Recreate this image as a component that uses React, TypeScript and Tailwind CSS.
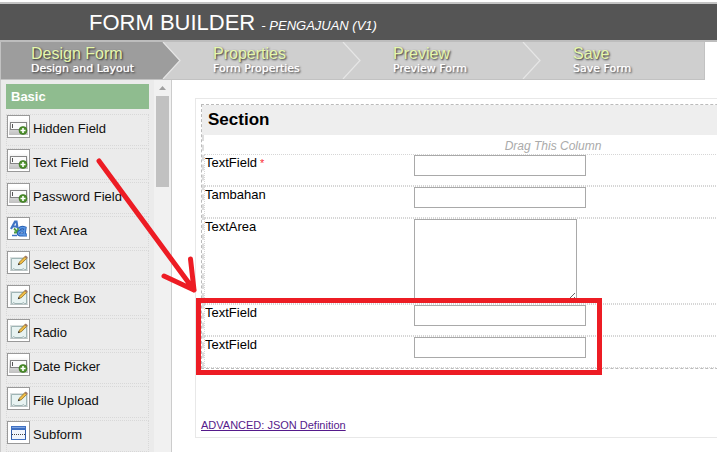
import type { ReactNode } from "react";

type IconKind = "field" | "area" | "edit" | "subform";

const steps = [
  { title: "Design Form", note: "Design and Layout", active: true },
  { title: "Properties", note: "Form Properties", active: false },
  { title: "Preview", note: "Preview Form", active: false },
  { title: "Save", note: "Save Form", active: false },
];

const palette: { label: string; icon: IconKind }[] = [
  { label: "Hidden Field", icon: "field" },
  { label: "Text Field", icon: "field" },
  { label: "Password Field", icon: "field" },
  { label: "Text Area", icon: "area" },
  { label: "Select Box", icon: "edit" },
  { label: "Check Box", icon: "edit" },
  { label: "Radio", icon: "edit" },
  { label: "Date Picker", icon: "field" },
  { label: "File Upload", icon: "edit" },
  { label: "Subform", icon: "subform" },
];

function FieldIcon() {
  return (
    <svg width="21" height="21" viewBox="0 0 21 21" aria-hidden="true">
      <defs>
        <linearGradient id="fieldBg" x1="0" y1="0" x2="0" y2="1">
          <stop offset="0" stopColor="#ffffff" />
          <stop offset="1" stopColor="#c0c0c0" />
        </linearGradient>
      </defs>
      <rect x="1" y="3" width="19" height="16" fill="url(#fieldBg)" />
      <rect x="2.500" y="6.500" width="16" height="7" fill="#fbfbfb" stroke="#858585" />
      <path d="M4.500 8v4" stroke="#555" />
      <circle cx="15" cy="14.500" r="4" fill="#4c8f2b" stroke="#356d1d" strokeWidth="0.600" />
      <path d="M15 12v5M12.500 14.500h5" stroke="#fff" strokeWidth="1.600" />
    </svg>
  );
}

function AreaIcon() {
  return (
    <svg width="21" height="21" viewBox="0 0 21 21" aria-hidden="true" fill="none">
      <path d="M3 11L7 3.500h1.500l1 6.500M4.500 8.500h4.500" stroke="#3f74c4" strokeWidth="2.200" />
      <path d="M6 10.500l3.500 3.500M10 10v4.500H6" stroke="#4f9d45" strokeWidth="1.800" />
      <path d="M11 11q2.500-2.500 6-1l-1 7h3M16 13q-5-0.500-5.500 2t5 1.500" stroke="#2860b4" strokeWidth="3.200" />
      <path d="M11 11q2.500-2.500 6-1l-1 7h3M16 13q-5-0.500-5.500 2t5 1.500" stroke="#5c98e4" strokeWidth="1.400" />
      <path d="M4 17.500h5" stroke="#3f74c4" strokeWidth="1.500" />
    </svg>
  );
}

function EditIcon() {
  return (
    <svg width="21" height="21" viewBox="0 0 21 21" aria-hidden="true">
      <rect x="2" y="5" width="18" height="14" fill="#dadfdf" />
      <path d="M3.500 6.500h15v11h-2l-1-1-1.500 1H7l-1.500-1-1 1h-1z" fill="#e8f3f2" stroke="#9fb5b5" />
      <path d="M2.500 18.500h17" stroke="#bcc5c5" />
      <path d="M10.500 12.500l1-2.500 5.500-5.500 1.800 1.800-5.500 5.500z" fill="#f0bd45" stroke="#8b6b26" strokeWidth="0.800" />
      <path d="M16.500 4.700l1.300-1.200 2 1.800-1.300 1.400z" fill="#9f7965" />
      <path d="M9.800 13.200l2.200-0.700-1.400-1.400z" fill="#333" />
    </svg>
  );
}

function SubformIcon() {
  return (
    <svg width="21" height="21" viewBox="0 0 21 21" aria-hidden="true">
      <rect x="3.500" y="4.500" width="14" height="13" fill="#f0f5fd" stroke="#2f5ba8" />
      <rect x="3" y="4" width="15" height="4" fill="#3f70c2" />
      <path d="M4 5.500h13" stroke="#7fa5e2" />
      <path d="M4 12.500h13" stroke="#444" strokeDasharray="1 1" />
      <path d="M3 17.500h15" stroke="#3f70c2" />
    </svg>
  );
}

const icons: Record<IconKind, () => ReactNode> = {
  field: FieldIcon,
  area: AreaIcon,
  edit: EditIcon,
  subform: SubformIcon,
};

function StepArrow({ active }: { active: boolean }) {
  return (
    <svg width="20" height="37" viewBox="0 0 20 37" className="shrink-0" aria-hidden="true">
      <rect width="20" height="37" fill="#cfcfcf" />
      {active && <path d="M0 0h2l17 18.500L2 37H0z" fill="#9d9d9d" />}
      <path d="M2 0l17 18.500L2 37" fill="none" stroke="#e6e6e6" strokeWidth="1.200" />
    </svg>
  );
}

function Header() {
  return (
    <header className="mt-0.5 flex h-10 shrink-0 items-baseline border-y-2 border-t-[#c4c4c4] border-b-[#bdbdbd] bg-[#555] pt-1 pl-[89px] text-white">
      <h1 className="text-[22px] leading-[30px]">
        FORM BUILDER <span className="text-[13px] italic">- PENGAJUAN (V1)</span>
      </h1>
    </header>
  );
}

function Steps() {
  return (
    <nav className="flex h-[38px] w-[705px] shrink-0 border-r border-b border-l border-[#c2c2c2] bg-[#cfcfcf]">
      {steps.map((step, i) => (
        <a
          key={step.title}
          href="#"
          className={`flex ${i < 3 ? "w-[180px]" : "flex-1"} ${step.active ? "bg-[#9d9d9d] pl-[30px]" : "pl-8"}`}
        >
          <span className="flex-1 pt-1 whitespace-nowrap">
            <span className="block text-[16px] leading-4 text-[#e6f7ac] [text-shadow:1px_1px_2px_#222]">{step.title}</span>
            <span className="block font-['DejaVu_Sans',sans-serif] text-[11px] leading-[14px] text-white [text-shadow:0_0_1px_#fff,1px_1px_2px_#111]">
              {step.note}
            </span>
          </span>
          {i < 3 && <StepArrow active={step.active} />}
        </a>
      ))}
    </nav>
  );
}

function Sidebar() {
  return (
    <aside className="flex w-[172px] shrink-0 overflow-hidden border-r border-l border-[#ccc] bg-[#ebebeb]">
      <div className="flex-1 pt-1 pr-[5px] pl-[5px]">
        <h2 className="bg-[#8fbc8f] pl-[5px] text-[13px] leading-[25px] font-bold text-white">Basic</h2>
        <ul className="mt-[5px] flex flex-col gap-0.5">
          {palette.map((item) => {
            const Icon = icons[item.icon];
            return (
              <li key={item.label}>
                <button
                  type="button"
                  className="flex h-8 w-full items-start gap-[3px] border border-dotted border-[#d8d8d8] text-left text-[13px] leading-[28px] whitespace-nowrap text-[#111]"
                >
                  <span className="block size-[23px] shrink-0 border border-[#999] bg-white">
                    <Icon />
                  </span>
                  {item.label}
                </button>
              </li>
            );
          })}
        </ul>
      </div>
      <div className="flex w-[17px] flex-col items-center bg-[#f1f1f1]">
        <svg width="17" height="16" viewBox="0 0 17 16" aria-hidden="true">
          <path d="M5 10l3.500-4 3.500 4z" fill="#a0a0a0" />
        </svg>
        <div className="h-[91px] w-[13px] bg-[#c1c1c1]" />
      </div>
    </aside>
  );
}

function Row({ id, label, required, area }: { id: string; label: string; required?: boolean; area?: boolean }) {
  return (
    <div className={`flex items-start border border-dotted border-[#d6d6d6] ${area ? "h-[86px]" : "h-8"}`}>
      <label htmlFor={id} className="w-[209px] text-[13px] leading-4 text-black">
        {label}
        {required && <span className="text-[11px] text-red-500"> *</span>}
      </label>
      {area ? (
        <textarea id={id} className="block h-[83px] w-[163px] border border-[#a9a9a9] bg-white text-[13px]" />
      ) : (
        <input id={id} type="text" className="block h-[21px] w-[172px] border border-[#a9a9a9] bg-white px-0.5 text-[13px]" />
      )}
    </div>
  );
}

function Canvas() {
  return (
    <main className="min-w-0 flex-1 overflow-hidden pt-[18px] pl-[23px]">
      <div className="min-w-[714px] border border-[#e8e8e8] p-[5px] pb-1">
        <section className="border border-dashed border-[#bbb]">
          <h2 className="bg-[#eee] pl-1.5 text-[17px] leading-[30px] font-bold text-black">Section</h2>
          <div className="border-l-2 border-dashed border-[#ddd]">
            <p className="pt-1 text-center text-[12px] leading-[15px] text-[#aaa] italic">Drag This Column</p>
            <Row id="field1" label="TextField" required />
            <Row id="field2" label="Tambahan" />
            <Row id="field3" label="TextArea" area />
            <Row id="field4" label="TextField" />
            <Row id="field5" label="TextField" />
          </div>
        </section>
        <a href="#" className="mt-12 block w-fit text-[11px] leading-4 text-[#551a8b] underline">
          ADVANCED: JSON Definition
        </a>
      </div>
    </main>
  );
}

/* Tutorial marks drawn over the page: drag arrow and drop-target frame. */
function Annotation() {
  return (
    <svg
      className="pointer-events-none absolute top-0 left-0"
      width="717"
      height="452"
      viewBox="0 0 717 452"
      fill="none"
      stroke="#ed1c24"
      strokeWidth="5"
      aria-hidden="true"
    >
      <path d="M99 161L194 290M164 276L194 290L190.500 259" strokeLinecap="round" strokeLinejoin="round" />
      <rect x="198.500" y="300.500" width="401" height="72" />
    </svg>
  );
}

export default function App() {
  return (
    <div className="relative flex h-screen flex-col overflow-hidden bg-white font-['Liberation_Sans',Arial,sans-serif]">
      <Header />
      <Steps />
      <div className="flex min-h-0 flex-1">
        <Sidebar />
        <Canvas />
      </div>
      <Annotation />
    </div>
  );
}
